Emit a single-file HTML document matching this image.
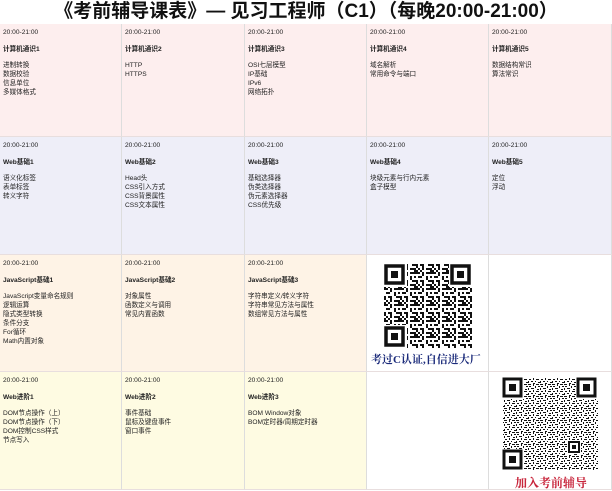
<!DOCTYPE html>
<html><head><meta charset="utf-8"><style>
*{margin:0;padding:0;box-sizing:border-box}
body{width:612px;height:490px;background:#fff;font-family:"Liberation Sans","Noto Sans CJK SC",sans-serif;position:relative;overflow:hidden;color:#222}
.title{position:absolute;left:0;top:0;width:612px;height:24px;text-align:center;font-size:19px;font-weight:bold;line-height:24px;color:#111;letter-spacing:0px}
.c{position:absolute;font-size:6.6px;line-height:9px;padding:4px 0 0 3px;border-right:1px solid #ddd;border-bottom:1px solid #e8dede}
.c .t{margin-bottom:8px}
.c .h{font-weight:bold;margin-bottom:7px}
.r1{background:#fdeeee;top:24px;height:113px}
.r2{background:#eeeef8;top:137px;height:118px}
.r3{background:#fef3e6;top:255px;height:117px}
.r4{background:#fefbe2;top:372px;height:118px}
.w{background:#fff}
.k0{left:0;width:122px}.k1{left:122px;width:123px}.k2{left:245px;width:122px}.k3{left:367px;width:122px}.k4{left:489px;width:123px}
.cap{position:absolute;font-family:"Liberation Serif","Noto Serif CJK SC",serif;font-weight:bold;white-space:nowrap}
</style></head><body>
<div class="title">《考前辅导课表》— 见习工程师（C1）（每晚20:00-21:00）</div>

<div class="c r1 k0"><div class="t">20:00-21:00</div><div class="h">计算机通识1</div>进制转换<br>数据校验<br>信息单位<br>多媒体格式</div>
<div class="c r1 k1"><div class="t">20:00-21:00</div><div class="h">计算机通识2</div>HTTP<br>HTTPS</div>
<div class="c r1 k2"><div class="t">20:00-21:00</div><div class="h">计算机通识3</div>OSI七层模型<br>IP基础<br>IPv6<br>网络拓扑</div>
<div class="c r1 k3"><div class="t">20:00-21:00</div><div class="h">计算机通识4</div>域名解析<br>常用命令与端口</div>
<div class="c r1 k4"><div class="t">20:00-21:00</div><div class="h">计算机通识5</div>数据结构常识<br>算法常识</div>

<div class="c r2 k0"><div class="t">20:00-21:00</div><div class="h">Web基础1</div>语义化标签<br>表单标签<br>转义字符</div>
<div class="c r2 k1"><div class="t">20:00-21:00</div><div class="h">Web基础2</div>Head头<br>CSS引入方式<br>CSS背景属性<br>CSS文本属性</div>
<div class="c r2 k2"><div class="t">20:00-21:00</div><div class="h">Web基础3</div>基础选择器<br>伪类选择器<br>伪元素选择器<br>CSS优先级</div>
<div class="c r2 k3"><div class="t">20:00-21:00</div><div class="h">Web基础4</div>块级元素与行内元素<br>盒子模型</div>
<div class="c r2 k4"><div class="t">20:00-21:00</div><div class="h">Web基础5</div>定位<br>浮动</div>

<div class="c r3 k0"><div class="t">20:00-21:00</div><div class="h">JavaScript基础1</div>JavaScript变量命名规则<br>逻辑运算<br>隐式类型转换<br>条件分支<br>For循环<br>Math内置对象</div>
<div class="c r3 k1"><div class="t">20:00-21:00</div><div class="h">JavaScript基础2</div>对象属性<br>函数定义与调用<br>常见内置函数</div>
<div class="c r3 k2"><div class="t">20:00-21:00</div><div class="h">JavaScript基础3</div>字符串定义/转义字符<br>字符串常见方法与属性<br>数组常见方法与属性</div>
<div class="c r3 k3 w" style="height:117px"></div>
<div class="c r3 k4 w"></div>

<div class="c r4 k0"><div class="t">20:00-21:00</div><div class="h">Web进阶1</div>DOM节点操作（上）<br>DOM节点操作（下）<br>DOM控制CSS样式<br>节点写入</div>
<div class="c r4 k1"><div class="t">20:00-21:00</div><div class="h">Web进阶2</div>事件基础<br>鼠标及键盘事件<br>窗口事件</div>
<div class="c r4 k2"><div class="t">20:00-21:00</div><div class="h">Web进阶3</div>BOM Window对象<br>BOM定时器/周期定时器</div>
<div class="c r4 k3 w"></div>
<div class="c r4 k4 w"></div>

<svg style="position:absolute;left:0;top:0" width="612" height="490">
<defs>
<pattern id="q" width="16" height="16" patternUnits="userSpaceOnUse">
<path fill="#111" d="M0 0h4v2h-4zM6 0h2v4h-2zM10 0h6v2h-6zM2 4h4v2h-4zM10 4h2v4h-2zM14 4h2v2h-2zM0 8h2v4h-2zM4 8h4v2h-4zM12 8h4v2h-4zM6 10h2v4h-2zM2 12h2v2h-2zM10 12h4v2h-4zM0 14h2v2h-2zM14 12h2v4h-2zM4 14h2v2h-2z"/>
</pattern>
<pattern id="q2" width="12" height="12" patternUnits="userSpaceOnUse">
<path fill="#111" d="M0 0h3v1h-3zM5 0h1v2h-1zM8 0h3v1h-3zM1 2h2v1h-2zM7 2h1v2h-1zM10 2h2v1h-2zM0 4h1v2h-1zM3 4h3v1h-3zM9 5h2v1h-2zM5 6h1v2h-1zM1 7h2v1h-2zM8 7h3v1h-3zM0 9h1v2h-1zM3 9h2v1h-2zM7 9h1v1h-1zM10 10h2v1h-2zM5 11h2v1h-2z"/>
</pattern>
</defs>
<!-- QR1 -->
<rect x="384" y="264" width="88" height="84" fill="url(#q)"/>
<g fill="#fff"><rect x="383" y="263" width="24" height="24"/><rect x="449" y="263" width="24" height="24"/><rect x="383" y="325" width="24" height="24"/></g>
<g fill="none" stroke="#111" stroke-width="3.5"><rect x="386" y="266" width="17" height="17"/><rect x="452" y="266" width="17" height="17"/><rect x="386" y="328" width="17" height="17"/></g>
<g fill="#111"><rect x="391" y="271" width="7" height="7"/><rect x="457" y="271" width="7" height="7"/><rect x="391" y="333" width="7" height="7"/></g>
<!-- QR2 -->
<rect x="503" y="378" width="95" height="92" fill="url(#q2)"/>
<g fill="#fff"><rect x="502" y="377" width="22" height="22"/><rect x="576" y="377" width="22" height="22"/><rect x="502" y="449" width="22" height="22"/><rect x="567" y="440" width="14" height="14"/></g>
<g fill="none" stroke="#111" stroke-width="3"><rect x="504" y="379" width="17" height="17"/><rect x="578" y="379" width="17" height="17"/><rect x="504" y="451" width="17" height="17"/><rect x="569" y="442" width="10" height="10" stroke-width="2"/></g>
<g fill="#111"><rect x="509" y="384" width="7" height="7"/><rect x="583" y="384" width="7" height="7"/><rect x="509" y="456" width="7" height="7"/><rect x="572" y="445" width="4" height="4"/></g>
</svg>
<div class="cap" style="left:371px;top:351px;font-size:11px;color:#1a2a7a">考过C认证,自信进大厂</div>
<div class="cap" style="left:515px;top:474px;font-size:12px;color:#c8263c">加入考前辅导</div>
</body></html>
